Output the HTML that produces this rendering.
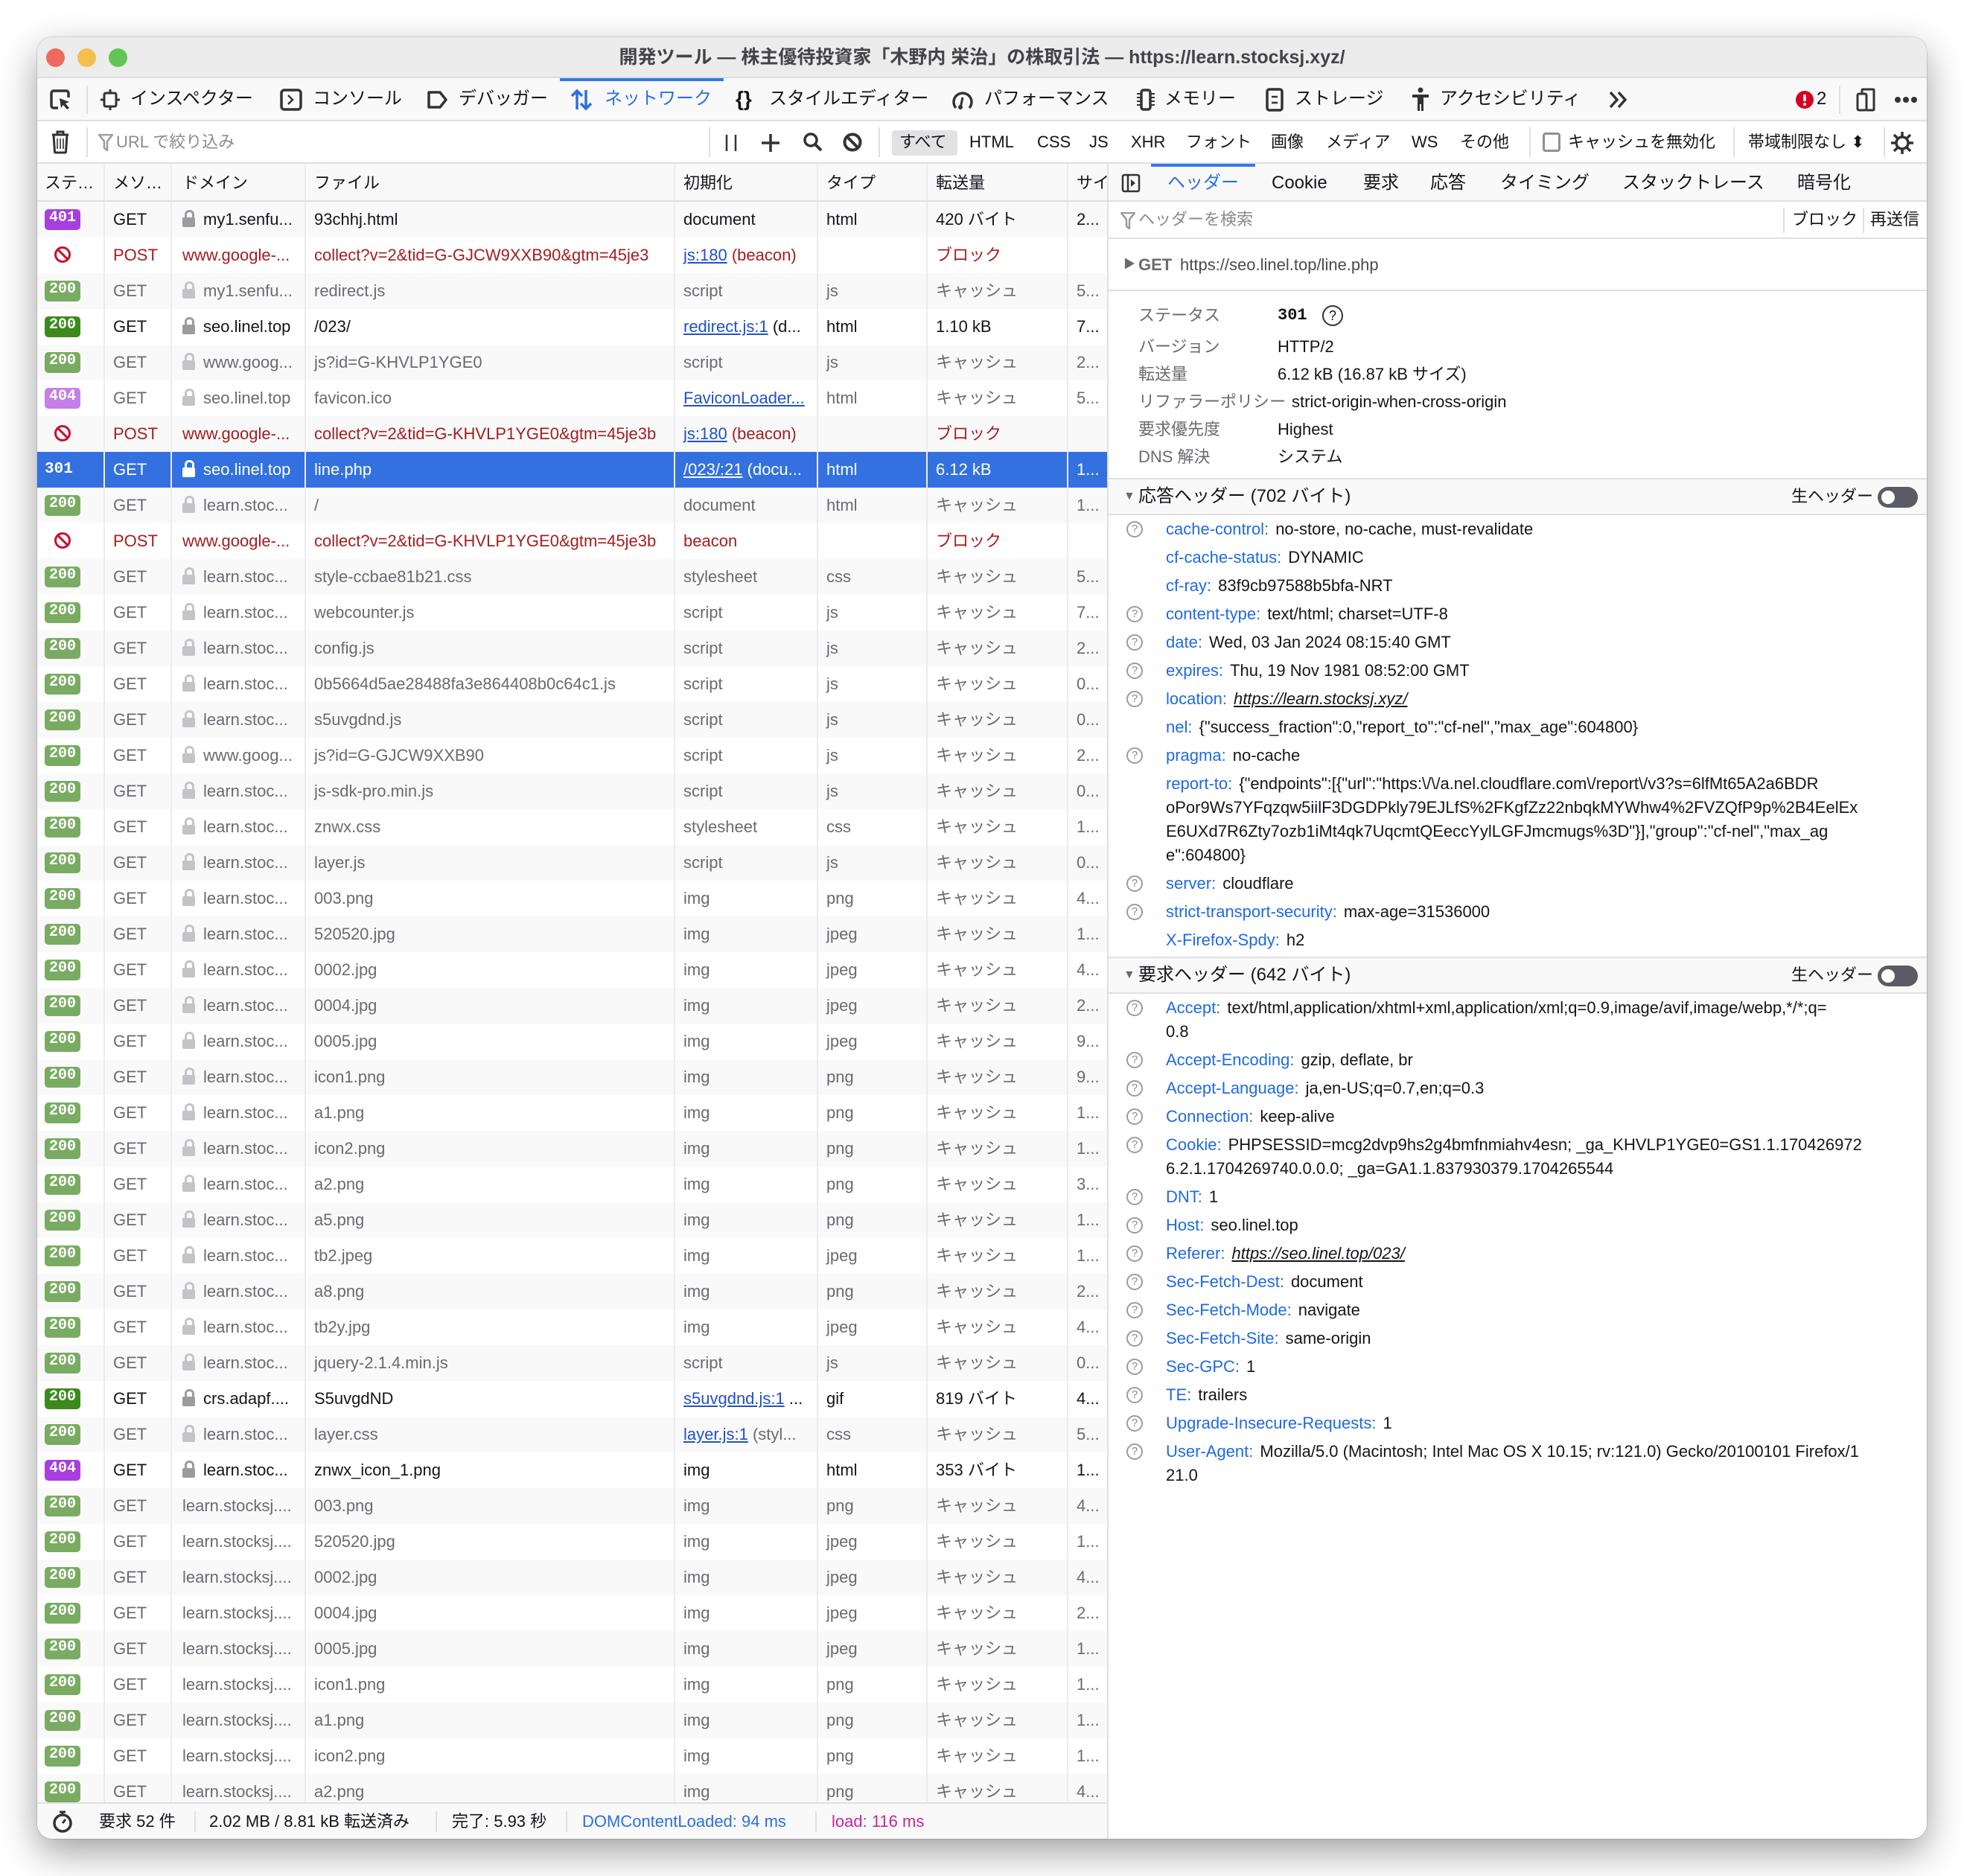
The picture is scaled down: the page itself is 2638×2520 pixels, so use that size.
<!DOCTYPE html>
<html><head><meta charset="utf-8">
<style>
*{box-sizing:border-box;margin:0;padding:0}
body{width:2638px;height:2520px;background:#fff;position:relative;overflow:hidden;font-family:"Liberation Sans","Noto Sans CJK JP",sans-serif;color:#15141a}
.win{position:absolute;left:50px;top:50px;width:2538px;height:2420px;border-radius:20px;overflow:hidden;background:#fff;box-shadow:0 18px 50px rgba(0,0,0,.38),0 0 0 1px rgba(0,0,0,.12)}
.a{position:absolute;white-space:nowrap}
.title{position:absolute;left:0;top:0;width:2538px;height:55px;background:#ececed;border-bottom:2px solid #dcdcde}
.tl{position:absolute;top:15px;width:25px;height:25px;border-radius:50%}
.tabs{position:absolute;left:0;top:55px;width:2538px;height:58px;background:#f9f9fa;border-bottom:2px solid #e0e0e2;font-size:24px}
.tabs .a{top:0;line-height:56px}
.flt{position:absolute;left:0;top:113px;width:2538px;height:57px;background:#fff;border-bottom:2px solid #e0e0e2;font-size:22px}
.flt .a{top:0;line-height:55px}
.vd{position:absolute;width:2px;background:#e0e0e2}
.left{position:absolute;left:0;top:170px;width:1437px;height:2201px;overflow:hidden}
.hdr{height:51px;background:#f9f9fa;border-bottom:2px solid #e0e0e2;display:flex;font-size:22px}
.hdr span{line-height:52px}
.row{height:48px;display:flex;font-size:22px;line-height:48px;color:#15141a}
.row:nth-child(odd){background:#f9f9fa}
.hdr span,.row span{display:block;overflow:hidden;white-space:nowrap;padding-left:11px;border-right:2px solid #ececee;position:relative}
.c1{width:91px;padding-left:10px!important}.c2{width:90px}.c3{width:180px;padding-left:14px!important}.c4{width:496px}.c5{width:192px}.c6{width:147px}.c7{width:189px}.c8{width:52px;border-right:none!important}
.row.c{color:#6a6a70}
.row.e{color:#a51d1d}
.row.s{background:#3371e0!important;color:#fff}
.row.s a{color:#fff}
.bd{position:absolute;left:10px;top:10px;width:48px;height:28px;line-height:28px;border-radius:5px;color:#fff;font:bold 20px "Liberation Mono",monospace;text-align:center;font-style:normal}
.g{background:#79ac62}.G{background:#3c8a1e}.p{background:#a83ee0}.q{background:#c47fe9}
.lk{display:inline-block;width:17px;height:24px;position:relative;vertical-align:middle;margin-right:11px;margin-top:-5px}
.lk:before{content:"";position:absolute;left:3px;top:0;width:7px;height:10px;border:3px solid #9b9ba0;border-bottom:none;border-radius:6px 6px 0 0}
.lk:after{content:"";position:absolute;left:0;top:10px;width:17px;height:13px;background:#9b9ba0;border-radius:2px}
.c .lk:before{border-color:#c4c4c8}.c .lk:after{background:#c4c4c8}
.s .lk:before{border-color:#fff}.s .lk:after{background:#fff}
.c3 .nl{margin-left:-3px}
a{color:#2150c8;text-decoration:underline}
.blk{display:inline-block;width:22px;height:22px;border:3px solid #c8102e;border-radius:50%;position:relative;margin-left:13px;vertical-align:middle;margin-top:-4px}
.blk:after{content:"";position:absolute;left:7px;top:-2px;width:3px;height:20px;background:#c8102e;transform:rotate(-45deg)}
.status{position:absolute;left:0;top:2371px;width:1437px;height:49px;background:#f9f9fa;border-top:2px solid #e0e0e2;font-size:22px}
.status .a{top:0;line-height:47px}
.right{position:absolute;left:1437px;top:170px;width:1101px;height:2250px;border-left:2px solid #e0e0e2;background:#fff}
.rt{position:absolute;left:0;top:0;width:1101px;height:51px;background:#f9f9fa;border-bottom:2px solid #e0e0e2;font-size:24px}
.rt .a{top:0;line-height:52px}
.rf{position:absolute;left:0;top:51px;width:1101px;height:50px;border-bottom:2px solid #e0e0e2;font-size:22px}
.rf .a{top:0;line-height:48px}
.sum .a{font-size:22px;line-height:30px}
.lab{color:#6a6a70}
.sec{position:absolute;left:0;width:1101px;height:50px;background:#f9f9fa;border-top:2px solid #e0e0e2;border-bottom:2px solid #e0e0e2;font-size:24px}
.sec .a{line-height:46px;top:0}
.tg{position:absolute;right:14px;top:10px;width:54px;height:28px;border-radius:14px;background:#5b5b66}
.tg:after{content:"";position:absolute;left:5px;top:5px;width:18px;height:18px;border-radius:50%;background:#fff}
.ent{position:absolute;left:0;width:1101px;font-size:22px}
.e1{position:relative;padding:3px 0 3px 77px;line-height:32px;white-space:nowrap}
.e1 b{font-weight:normal;color:#1f6ae0;margin-right:9px}
.e1 .qm{position:absolute;left:24px;top:8px;width:22px;height:22px;border:2px solid #9b9ba0;border-radius:50%;color:#8b8b90;font-size:15px;line-height:18px;text-align:center}
.e1 i{color:#15141a}
</style></head><body>
<div class="win">
 <div class="title">
  <div class="tl" style="left:12px;background:#ec6a5e"></div>
  <div class="tl" style="left:54px;background:#f4bf4f"></div>
  <div class="tl" style="left:96px;background:#61c554"></div>
  <div class="a" style="left:0;width:2538px;text-align:center;top:0;line-height:55px;font-size:25px;font-weight:bold;color:#444448">開発ツール — 株主優待投資家「木野内 栄治」の株取引法 — https://learn.stocksj.xyz/</div>
 </div>
 <div class="tabs">
  <svg class="a" style="left:16px;top:14px" width="30" height="30" viewBox="0 0 30 30"><path d="M12 26H6a3 3 0 0 1-3-3V6a3 3 0 0 1 3-3h17a3 3 0 0 1 3 3v6" fill="none" stroke="#333" stroke-width="3.5"/><path d="M14 13l13 5-5 2 5 6-3 2-5-6-3 4z" fill="#333"/></svg>
  <div class="vd" style="left:66px;top:10px;height:38px"></div>
  <svg class="a" style="left:84px;top:14px" width="28" height="30" viewBox="0 0 28 30"><rect x="6" y="6" width="16" height="18" rx="2" fill="none" stroke="#333" stroke-width="3"/><path d="M14 1v5M14 24v5M1 15h5M22 15h5" stroke="#333" stroke-width="3"/></svg>
  <div class="a" style="left:125px">インスペクター</div>
  <svg class="a" style="left:326px;top:14px" width="30" height="30" viewBox="0 0 30 30"><rect x="2" y="2" width="26" height="26" rx="4" fill="none" stroke="#333" stroke-width="3.5"/><path d="M11 9l6 6-6 6" fill="none" stroke="#333" stroke-width="2.5"/></svg>
  <div class="a" style="left:370px">コンソール</div>
  <svg class="a" style="left:522px;top:14px" width="30" height="30" viewBox="0 0 30 30"><path d="M4 5h15l8 10-8 10H4z" fill="none" stroke="#333" stroke-width="3.5" stroke-linejoin="round"/></svg>
  <div class="a" style="left:566px">デバッガー</div>
  <div style="position:absolute;left:702px;top:0;width:220px;height:4px;background:#3478e8"></div>
  <svg class="a" style="left:715px;top:13px" width="32" height="32" viewBox="0 0 32 32"><path d="M10 29V4M3 11l7-7 7 7M22 3v25M15 21l7 7 7-7" fill="none" stroke="#2b6fe0" stroke-width="3.5"/></svg>
  <div class="a" style="left:762px;color:#2b6fe0">ネットワーク</div>
  <div class="a" style="left:938px;font-weight:bold;font-size:28px">{}</div>
  <div class="a" style="left:983px">スタイルエディター</div>
  <svg class="a" style="left:1228px;top:14px" width="30" height="30" viewBox="0 0 30 30"><path d="M6 26A12 12 0 1 1 24 26" fill="none" stroke="#333" stroke-width="3.5"/><path d="M15 12l-3 14" stroke="#333" stroke-width="3"/><circle cx="12" cy="25" r="3" fill="#333"/></svg>
  <div class="a" style="left:1272px">パフォーマンス</div>
  <svg class="a" style="left:1474px;top:13px" width="30" height="32" viewBox="0 0 30 32"><rect x="9" y="3" width="12" height="26" rx="3" fill="none" stroke="#333" stroke-width="3.5"/><path d="M3 8h5M3 13h5M3 18h5M3 23h5M22 8h5M22 13h5M22 18h5M22 23h5" stroke="#333" stroke-width="2"/></svg>
  <div class="a" style="left:1514px">メモリー</div>
  <svg class="a" style="left:1649px;top:13px" width="26" height="32" viewBox="0 0 26 32"><rect x="3" y="2" width="20" height="28" rx="3" fill="none" stroke="#333" stroke-width="3.5"/><path d="M9 12h8M9 20h8" stroke="#333" stroke-width="2.5"/></svg>
  <div class="a" style="left:1689px">ストレージ</div>
  <svg class="a" style="left:1844px;top:12px" width="28" height="34" viewBox="0 0 28 34"><circle cx="14" cy="4" r="3.5" fill="#333"/><path d="M3 10h22v4h-7v18h-3v-9h-2v9h-3V14H3z" fill="#333"/></svg>
  <div class="a" style="left:1884px">アクセシビリティ</div>
  <svg class="a" style="left:2110px;top:16px" width="28" height="26" viewBox="0 0 28 26"><path d="M3 3l9 10-9 10M14 3l9 10-9 10" fill="none" stroke="#333" stroke-width="3.5"/></svg>
  <svg class="a" style="left:2362px;top:17px" width="24" height="24" viewBox="0 0 24 24"><circle cx="12" cy="12" r="12" fill="#d70022"/><path d="M12 5v9" stroke="#fff" stroke-width="3.5"/><circle cx="12" cy="18" r="2" fill="#fff"/></svg>
  <div class="a" style="left:2390px">2</div>
  <div class="vd" style="left:2420px;top:10px;height:38px"></div>
  <svg class="a" style="left:2440px;top:13px" width="30" height="32" viewBox="0 0 30 32"><rect x="5" y="8" width="12" height="22" rx="2" fill="none" stroke="#333" stroke-width="3"/><path d="M11 8V3a1 1 0 0 1 1-1h14a1 1 0 0 1 1 1v26a1 1 0 0 1-1 1h-9" fill="none" stroke="#333" stroke-width="3"/></svg>
  <svg class="a" style="left:2494px;top:24px" width="32" height="10" viewBox="0 0 32 10"><circle cx="5" cy="5" r="4" fill="#333"/><circle cx="16" cy="5" r="4" fill="#333"/><circle cx="27" cy="5" r="4" fill="#333"/></svg>
 </div>
 <div class="flt">
  <svg class="a" style="left:18px;top:12px" width="26" height="32" viewBox="0 0 26 32"><path d="M2 6h22M9 6V2h8v4" fill="none" stroke="#333" stroke-width="3"/><path d="M4 6l1.5 23a1 1 0 0 0 1 1h13a1 1 0 0 0 1-1L22 6" fill="none" stroke="#333" stroke-width="3"/><path d="M9 11v14M13 11v14M17 11v14" stroke="#333" stroke-width="1.6"/></svg>
  <div class="vd" style="left:66px;top:8px;height:40px"></div>
  <svg class="a" style="left:82px;top:17px" width="20" height="24" viewBox="0 0 20 24"><path d="M1 1h18l-7 9v12l-4-3V10z" fill="none" stroke="#9b9ba0" stroke-width="2.5" stroke-linejoin="round"/></svg>
  <div class="a" style="left:106px;color:#8b8b90">URL で絞り込み</div>
  <div class="vd" style="left:902px;top:8px;height:40px"></div>
  <svg class="a" style="left:922px;top:16px" width="20" height="26" viewBox="0 0 20 26"><path d="M4 2v22M16 2v22" stroke="#333" stroke-width="2.5"/></svg>
  <svg class="a" style="left:972px;top:16px" width="26" height="26" viewBox="0 0 26 26"><path d="M13 1v24M1 13h24" stroke="#333" stroke-width="3.5"/></svg>
  <svg class="a" style="left:1028px;top:14px" width="28" height="28" viewBox="0 0 28 28"><circle cx="11" cy="11" r="8" fill="none" stroke="#333" stroke-width="3.5"/><path d="M17 17l8 8" stroke="#333" stroke-width="4"/></svg>
  <svg class="a" style="left:1082px;top:15px" width="26" height="26" viewBox="0 0 26 26"><circle cx="13" cy="13" r="10.5" fill="none" stroke="#333" stroke-width="4"/><path d="M6 6l14 14" stroke="#333" stroke-width="4"/></svg>
  <div class="vd" style="left:1130px;top:8px;height:40px"></div>
  <div style="position:absolute;left:1148px;top:12px;width:88px;height:34px;background:#e2e2e5;border-radius:4px"></div>
  <div class="a" style="left:1158px">すべて</div>
  <div class="a" style="left:1252px">HTML</div>
  <div class="a" style="left:1343px">CSS</div>
  <div class="a" style="left:1413px">JS</div>
  <div class="a" style="left:1469px">XHR</div>
  <div class="a" style="left:1543px">フォント</div>
  <div class="a" style="left:1657px">画像</div>
  <div class="a" style="left:1731px">メディア</div>
  <div class="a" style="left:1846px">WS</div>
  <div class="a" style="left:1911px">その他</div>
  <div class="vd" style="left:2004px;top:8px;height:40px"></div>
  <div style="position:absolute;left:2022px;top:15px;width:24px;height:26px;border:3px solid #8f8f9d;border-radius:4px"></div>
  <div class="a" style="left:2056px">キャッシュを無効化</div>
  <div class="vd" style="left:2278px;top:8px;height:40px"></div>
  <div class="a" style="left:2298px">帯域制限なし ⬍</div>
  <div class="vd" style="left:2480px;top:8px;height:40px"></div>
  <svg class="a" style="left:2488px;top:12px" width="34" height="34" viewBox="0 0 34 34"><circle cx="17" cy="17" r="8" fill="none" stroke="#333" stroke-width="3.5"/><path d="M17 2v7M17 25v7M2 17h7M25 17h7M6 6l5 5M23 23l5 5M6 28l5-5M23 11l5-5" stroke="#333" stroke-width="3.5"/></svg>
 </div>

 <div class="left">
  <div class="hdr"><span class="c1">ステ…</span><span class="c2">メソ…</span><span class="c3">ドメイン</span><span class="c4">ファイル</span><span class="c5">初期化</span><span class="c6">タイプ</span><span class="c7">転送量</span><span class="c8">サイ</span></div>
  <div>
  <div class="row"><span class="c1"><i class="bd p">401</i></span><span class="c2">GET</span><span class="c3"><i class="lk"></i>my1.senfu...</span><span class="c4">93chhj.html</span><span class="c5">document</span><span class="c6">html</span><span class="c7">420 バイト</span><span class="c8">2...</span></div>
  <div class="row e"><span class="c1"><i class="blk"></i></span><span class="c2">POST</span><span class="c3">www.google-...</span><span class="c4">collect?v=2&amp;tid=G-GJCW9XXB90&amp;gtm=45je3</span><span class="c5"><a>js:180</a> (beacon)</span><span class="c6"></span><span class="c7">ブロック</span><span class="c8"></span></div>
  <div class="row c"><span class="c1"><i class="bd g">200</i></span><span class="c2">GET</span><span class="c3"><i class="lk"></i>my1.senfu...</span><span class="c4">redirect.js</span><span class="c5">script</span><span class="c6">js</span><span class="c7">キャッシュ</span><span class="c8">5...</span></div>
  <div class="row"><span class="c1"><i class="bd G">200</i></span><span class="c2">GET</span><span class="c3"><i class="lk"></i>seo.linel.top</span><span class="c4">/023/</span><span class="c5"><a>redirect.js:1</a> (d...</span><span class="c6">html</span><span class="c7">1.10 kB</span><span class="c8">7...</span></div>
  <div class="row c"><span class="c1"><i class="bd g">200</i></span><span class="c2">GET</span><span class="c3"><i class="lk"></i>www.goog...</span><span class="c4">js?id=G-KHVLP1YGE0</span><span class="c5">script</span><span class="c6">js</span><span class="c7">キャッシュ</span><span class="c8">2...</span></div>
  <div class="row c"><span class="c1"><i class="bd q">404</i></span><span class="c2">GET</span><span class="c3"><i class="lk"></i>seo.linel.top</span><span class="c4">favicon.ico</span><span class="c5"><a>FaviconLoader...</a></span><span class="c6">html</span><span class="c7">キャッシュ</span><span class="c8">5...</span></div>
  <div class="row e"><span class="c1"><i class="blk"></i></span><span class="c2">POST</span><span class="c3">www.google-...</span><span class="c4">collect?v=2&amp;tid=G-KHVLP1YGE0&amp;gtm=45je3b</span><span class="c5"><a>js:180</a> (beacon)</span><span class="c6"></span><span class="c7">ブロック</span><span class="c8"></span></div>
  <div class="row s"><span class="c1" style="font:bold 21px 'Liberation Mono',monospace;line-height:48px">301</span><span class="c2">GET</span><span class="c3"><i class="lk"></i>seo.linel.top</span><span class="c4">line.php</span><span class="c5"><a>/023/:21</a> (docu...</span><span class="c6">html</span><span class="c7">6.12 kB</span><span class="c8">1...</span></div>
  <div class="row c"><span class="c1"><i class="bd g">200</i></span><span class="c2">GET</span><span class="c3"><i class="lk"></i>learn.stoc...</span><span class="c4">/</span><span class="c5">document</span><span class="c6">html</span><span class="c7">キャッシュ</span><span class="c8">1...</span></div>
  <div class="row e"><span class="c1"><i class="blk"></i></span><span class="c2">POST</span><span class="c3">www.google-...</span><span class="c4">collect?v=2&amp;tid=G-KHVLP1YGE0&amp;gtm=45je3b</span><span class="c5">beacon</span><span class="c6"></span><span class="c7">ブロック</span><span class="c8"></span></div>
  <div class="row c"><span class="c1"><i class="bd g">200</i></span><span class="c2">GET</span><span class="c3"><i class="lk"></i>learn.stoc...</span><span class="c4">style-ccbae81b21.css</span><span class="c5">stylesheet</span><span class="c6">css</span><span class="c7">キャッシュ</span><span class="c8">5...</span></div>
  <div class="row c"><span class="c1"><i class="bd g">200</i></span><span class="c2">GET</span><span class="c3"><i class="lk"></i>learn.stoc...</span><span class="c4">webcounter.js</span><span class="c5">script</span><span class="c6">js</span><span class="c7">キャッシュ</span><span class="c8">7...</span></div>
  <div class="row c"><span class="c1"><i class="bd g">200</i></span><span class="c2">GET</span><span class="c3"><i class="lk"></i>learn.stoc...</span><span class="c4">config.js</span><span class="c5">script</span><span class="c6">js</span><span class="c7">キャッシュ</span><span class="c8">2...</span></div>
  <div class="row c"><span class="c1"><i class="bd g">200</i></span><span class="c2">GET</span><span class="c3"><i class="lk"></i>learn.stoc...</span><span class="c4">0b5664d5ae28488fa3e864408b0c64c1.js</span><span class="c5">script</span><span class="c6">js</span><span class="c7">キャッシュ</span><span class="c8">0...</span></div>
  <div class="row c"><span class="c1"><i class="bd g">200</i></span><span class="c2">GET</span><span class="c3"><i class="lk"></i>learn.stoc...</span><span class="c4">s5uvgdnd.js</span><span class="c5">script</span><span class="c6">js</span><span class="c7">キャッシュ</span><span class="c8">0...</span></div>
  <div class="row c"><span class="c1"><i class="bd g">200</i></span><span class="c2">GET</span><span class="c3"><i class="lk"></i>www.goog...</span><span class="c4">js?id=G-GJCW9XXB90</span><span class="c5">script</span><span class="c6">js</span><span class="c7">キャッシュ</span><span class="c8">2...</span></div>
  <div class="row c"><span class="c1"><i class="bd g">200</i></span><span class="c2">GET</span><span class="c3"><i class="lk"></i>learn.stoc...</span><span class="c4">js-sdk-pro.min.js</span><span class="c5">script</span><span class="c6">js</span><span class="c7">キャッシュ</span><span class="c8">0...</span></div>
  <div class="row c"><span class="c1"><i class="bd g">200</i></span><span class="c2">GET</span><span class="c3"><i class="lk"></i>learn.stoc...</span><span class="c4">znwx.css</span><span class="c5">stylesheet</span><span class="c6">css</span><span class="c7">キャッシュ</span><span class="c8">1...</span></div>
  <div class="row c"><span class="c1"><i class="bd g">200</i></span><span class="c2">GET</span><span class="c3"><i class="lk"></i>learn.stoc...</span><span class="c4">layer.js</span><span class="c5">script</span><span class="c6">js</span><span class="c7">キャッシュ</span><span class="c8">0...</span></div>
  <div class="row c"><span class="c1"><i class="bd g">200</i></span><span class="c2">GET</span><span class="c3"><i class="lk"></i>learn.stoc...</span><span class="c4">003.png</span><span class="c5">img</span><span class="c6">png</span><span class="c7">キャッシュ</span><span class="c8">4...</span></div>
  <div class="row c"><span class="c1"><i class="bd g">200</i></span><span class="c2">GET</span><span class="c3"><i class="lk"></i>learn.stoc...</span><span class="c4">520520.jpg</span><span class="c5">img</span><span class="c6">jpeg</span><span class="c7">キャッシュ</span><span class="c8">1...</span></div>
  <div class="row c"><span class="c1"><i class="bd g">200</i></span><span class="c2">GET</span><span class="c3"><i class="lk"></i>learn.stoc...</span><span class="c4">0002.jpg</span><span class="c5">img</span><span class="c6">jpeg</span><span class="c7">キャッシュ</span><span class="c8">4...</span></div>
  <div class="row c"><span class="c1"><i class="bd g">200</i></span><span class="c2">GET</span><span class="c3"><i class="lk"></i>learn.stoc...</span><span class="c4">0004.jpg</span><span class="c5">img</span><span class="c6">jpeg</span><span class="c7">キャッシュ</span><span class="c8">2...</span></div>
  <div class="row c"><span class="c1"><i class="bd g">200</i></span><span class="c2">GET</span><span class="c3"><i class="lk"></i>learn.stoc...</span><span class="c4">0005.jpg</span><span class="c5">img</span><span class="c6">jpeg</span><span class="c7">キャッシュ</span><span class="c8">9...</span></div>
  <div class="row c"><span class="c1"><i class="bd g">200</i></span><span class="c2">GET</span><span class="c3"><i class="lk"></i>learn.stoc...</span><span class="c4">icon1.png</span><span class="c5">img</span><span class="c6">png</span><span class="c7">キャッシュ</span><span class="c8">9...</span></div>
  <div class="row c"><span class="c1"><i class="bd g">200</i></span><span class="c2">GET</span><span class="c3"><i class="lk"></i>learn.stoc...</span><span class="c4">a1.png</span><span class="c5">img</span><span class="c6">png</span><span class="c7">キャッシュ</span><span class="c8">1...</span></div>
  <div class="row c"><span class="c1"><i class="bd g">200</i></span><span class="c2">GET</span><span class="c3"><i class="lk"></i>learn.stoc...</span><span class="c4">icon2.png</span><span class="c5">img</span><span class="c6">png</span><span class="c7">キャッシュ</span><span class="c8">1...</span></div>
  <div class="row c"><span class="c1"><i class="bd g">200</i></span><span class="c2">GET</span><span class="c3"><i class="lk"></i>learn.stoc...</span><span class="c4">a2.png</span><span class="c5">img</span><span class="c6">png</span><span class="c7">キャッシュ</span><span class="c8">3...</span></div>
  <div class="row c"><span class="c1"><i class="bd g">200</i></span><span class="c2">GET</span><span class="c3"><i class="lk"></i>learn.stoc...</span><span class="c4">a5.png</span><span class="c5">img</span><span class="c6">png</span><span class="c7">キャッシュ</span><span class="c8">1...</span></div>
  <div class="row c"><span class="c1"><i class="bd g">200</i></span><span class="c2">GET</span><span class="c3"><i class="lk"></i>learn.stoc...</span><span class="c4">tb2.jpeg</span><span class="c5">img</span><span class="c6">jpeg</span><span class="c7">キャッシュ</span><span class="c8">1...</span></div>
  <div class="row c"><span class="c1"><i class="bd g">200</i></span><span class="c2">GET</span><span class="c3"><i class="lk"></i>learn.stoc...</span><span class="c4">a8.png</span><span class="c5">img</span><span class="c6">png</span><span class="c7">キャッシュ</span><span class="c8">2...</span></div>
  <div class="row c"><span class="c1"><i class="bd g">200</i></span><span class="c2">GET</span><span class="c3"><i class="lk"></i>learn.stoc...</span><span class="c4">tb2y.jpg</span><span class="c5">img</span><span class="c6">jpeg</span><span class="c7">キャッシュ</span><span class="c8">4...</span></div>
  <div class="row c"><span class="c1"><i class="bd g">200</i></span><span class="c2">GET</span><span class="c3"><i class="lk"></i>learn.stoc...</span><span class="c4">jquery-2.1.4.min.js</span><span class="c5">script</span><span class="c6">js</span><span class="c7">キャッシュ</span><span class="c8">0...</span></div>
  <div class="row"><span class="c1"><i class="bd G">200</i></span><span class="c2">GET</span><span class="c3"><i class="lk"></i>crs.adapf....</span><span class="c4">S5uvgdND</span><span class="c5"><a>s5uvgdnd.js:1</a> ...</span><span class="c6">gif</span><span class="c7">819 バイト</span><span class="c8">4...</span></div>
  <div class="row c"><span class="c1"><i class="bd g">200</i></span><span class="c2">GET</span><span class="c3"><i class="lk"></i>learn.stoc...</span><span class="c4">layer.css</span><span class="c5"><a>layer.js:1</a> (styl...</span><span class="c6">css</span><span class="c7">キャッシュ</span><span class="c8">5...</span></div>
  <div class="row"><span class="c1"><i class="bd p">404</i></span><span class="c2">GET</span><span class="c3"><i class="lk"></i>learn.stoc...</span><span class="c4">znwx_icon_1.png</span><span class="c5">img</span><span class="c6">html</span><span class="c7">353 バイト</span><span class="c8">1...</span></div>
  <div class="row c"><span class="c1"><i class="bd g">200</i></span><span class="c2">GET</span><span class="c3">learn.stocksj....</span><span class="c4">003.png</span><span class="c5">img</span><span class="c6">png</span><span class="c7">キャッシュ</span><span class="c8">4...</span></div>
  <div class="row c"><span class="c1"><i class="bd g">200</i></span><span class="c2">GET</span><span class="c3">learn.stocksj....</span><span class="c4">520520.jpg</span><span class="c5">img</span><span class="c6">jpeg</span><span class="c7">キャッシュ</span><span class="c8">1...</span></div>
  <div class="row c"><span class="c1"><i class="bd g">200</i></span><span class="c2">GET</span><span class="c3">learn.stocksj....</span><span class="c4">0002.jpg</span><span class="c5">img</span><span class="c6">jpeg</span><span class="c7">キャッシュ</span><span class="c8">4...</span></div>
  <div class="row c"><span class="c1"><i class="bd g">200</i></span><span class="c2">GET</span><span class="c3">learn.stocksj....</span><span class="c4">0004.jpg</span><span class="c5">img</span><span class="c6">jpeg</span><span class="c7">キャッシュ</span><span class="c8">2...</span></div>
  <div class="row c"><span class="c1"><i class="bd g">200</i></span><span class="c2">GET</span><span class="c3">learn.stocksj....</span><span class="c4">0005.jpg</span><span class="c5">img</span><span class="c6">jpeg</span><span class="c7">キャッシュ</span><span class="c8">1...</span></div>
  <div class="row c"><span class="c1"><i class="bd g">200</i></span><span class="c2">GET</span><span class="c3">learn.stocksj....</span><span class="c4">icon1.png</span><span class="c5">img</span><span class="c6">png</span><span class="c7">キャッシュ</span><span class="c8">1...</span></div>
  <div class="row c"><span class="c1"><i class="bd g">200</i></span><span class="c2">GET</span><span class="c3">learn.stocksj....</span><span class="c4">a1.png</span><span class="c5">img</span><span class="c6">png</span><span class="c7">キャッシュ</span><span class="c8">1...</span></div>
  <div class="row c"><span class="c1"><i class="bd g">200</i></span><span class="c2">GET</span><span class="c3">learn.stocksj....</span><span class="c4">icon2.png</span><span class="c5">img</span><span class="c6">png</span><span class="c7">キャッシュ</span><span class="c8">1...</span></div>
  <div class="row c"><span class="c1"><i class="bd g">200</i></span><span class="c2">GET</span><span class="c3">learn.stocksj....</span><span class="c4">a2.png</span><span class="c5">img</span><span class="c6">png</span><span class="c7">キャッシュ</span><span class="c8">4...</span></div>
  </div>
 </div>
 <div class="status">
  <svg class="a" style="left:20px;top:9px" width="28" height="30" viewBox="0 0 28 30"><circle cx="14" cy="17" r="11" fill="none" stroke="#333" stroke-width="3.5"/><path d="M10 2h8M14 2v4M14 17l4-5" stroke="#333" stroke-width="3"/></svg>
  <div class="a" style="left:83px">要求 52 件</div>
  <div class="vd" style="left:211px;top:10px;height:28px"></div>
  <div class="a" style="left:231px">2.02 MB / 8.81 kB 転送済み</div>
  <div class="vd" style="left:535px;top:10px;height:28px"></div>
  <div class="a" style="left:557px">完了: 5.93 秒</div>
  <div class="vd" style="left:710px;top:10px;height:28px"></div>
  <div class="a" style="left:732px;color:#2b6fe0">DOMContentLoaded: 94 ms</div>
  <div class="vd" style="left:1045px;top:10px;height:28px"></div>
  <div class="a" style="left:1067px;color:#c5269f">load: 116 ms</div>
 </div>

 <div class="right">
  <div class="rt">
   <svg class="a" style="left:17px;top:13px" width="26" height="26" viewBox="0 0 26 26"><rect x="2" y="2" width="22" height="22" rx="2" fill="none" stroke="#333" stroke-width="2.5"/><path d="M9 2v22" stroke="#333" stroke-width="2.5"/><path d="M13 8l6 5-6 5z" fill="#333"/></svg>
   <div style="position:absolute;left:57px;top:0;width:140px;height:4px;background:#3478e8"></div>
   <div class="a" style="left:79px;color:#2b6fe0">ヘッダー</div>
   <div class="a" style="left:219px">Cookie</div>
   <div class="a" style="left:342px">要求</div>
   <div class="a" style="left:432px">応答</div>
   <div class="a" style="left:526px">タイミング</div>
   <div class="a" style="left:690px">スタックトレース</div>
   <div class="a" style="left:925px">暗号化</div>
  </div>
  <div class="rf">
   <svg class="a" style="left:16px;top:14px" width="20" height="24" viewBox="0 0 20 24"><path d="M1 1h18l-7 9v12l-4-3V10z" fill="none" stroke="#9b9ba0" stroke-width="2.5" stroke-linejoin="round"/></svg>
   <div class="a" style="left:40px;color:#8b8b90">ヘッダーを検索</div>
   <div class="vd" style="left:906px;top:8px;height:34px"></div>
   <div class="a" style="left:918px">ブロック</div>
   <div class="vd" style="left:1013px;top:8px;height:34px"></div>
   <div class="a" style="left:1023px">再送信</div>
  </div>
  <div style="position:absolute;left:0;top:101px;width:1101px;height:70px;border-bottom:2px solid #e0e0e2;font-size:22px">
   <div class="a" style="left:20px;top:0;line-height:70px;color:#6a6a70;font-size:16px">▶</div>
   <div class="a" style="left:40px;top:0;line-height:70px;color:#6a6a70;font-weight:bold">GET</div>
   <div class="a" style="left:96px;top:0;line-height:70px;color:#4a4a50">https://seo.linel.top/line.php</div>
  </div>
  <div class="sum">
   <div class="a lab" style="left:40px;top:189px">ステータス</div>
   <div class="a" style="left:227px;top:189px;font:bold 22px 'Liberation Mono',monospace;line-height:30px">301</div>
   <div class="a" style="left:287px;top:190px;width:28px;height:28px;border:2px solid #333;border-radius:50%;font-size:18px;line-height:24px;text-align:center">?</div>
   <div class="a lab" style="left:40px;top:231px">バージョン</div><div class="a" style="left:227px;top:231px">HTTP/2</div>
   <div class="a lab" style="left:40px;top:268px">転送量</div><div class="a" style="left:227px;top:268px">6.12 kB (16.87 kB サイズ)</div>
   <div class="a lab" style="left:40px;top:305px">リファラーポリシー</div><div class="a" style="left:246px;top:305px">strict-origin-when-cross-origin</div>
   <div class="a lab" style="left:40px;top:342px">要求優先度</div><div class="a" style="left:227px;top:342px">Highest</div>
   <div class="a lab" style="left:40px;top:379px">DNS 解決</div><div class="a" style="left:227px;top:379px">システム</div>
  </div>
  <div class="sec" style="top:422px">
   <div class="a" style="left:20px;font-size:16px;color:#6a6a70">▼</div>
   <div class="a" style="left:40px">応答ヘッダー (702 バイト)</div>
   <div class="a" style="left:917px;font-size:22px">生ヘッダー</div>
   <div class="tg"></div>
  </div>
  <div class="ent" style="top:472px">
   <div class="e1"><span class="qm">?</span><b>cache-control:</b>no-store, no-cache, must-revalidate</div>
   <div class="e1"><b>cf-cache-status:</b>DYNAMIC</div>
   <div class="e1"><b>cf-ray:</b>83f9cb97588b5bfa-NRT</div>
   <div class="e1"><span class="qm">?</span><b>content-type:</b>text/html; charset=UTF-8</div>
   <div class="e1"><span class="qm">?</span><b>date:</b>Wed, 03 Jan 2024 08:15:40 GMT</div>
   <div class="e1"><span class="qm">?</span><b>expires:</b>Thu, 19 Nov 1981 08:52:00 GMT</div>
   <div class="e1"><span class="qm">?</span><b>location:</b><i style="text-decoration:underline">https://learn.stocksj.xyz/</i></div>
   <div class="e1"><b>nel:</b>{"success_fraction":0,"report_to":"cf-nel","max_age":604800}</div>
   <div class="e1"><span class="qm">?</span><b>pragma:</b>no-cache</div>
   <div class="e1"><b>report-to:</b>{"endpoints":[{"url":"https:\/\/a.nel.cloudflare.com\/report\/v3?s=6lfMt65A2a6BDR<br>oPor9Ws7YFqzqw5iilF3DGDPkly79EJLfS%2FKgfZz22nbqkMYWhw4%2FVZQfP9p%2B4EelEx<br>E6UXd7R6Zty7ozb1iMt4qk7UqcmtQEeccYylLGFJmcmugs%3D"}],"group":"cf-nel","max_ag<br>e":604800}</div>
   <div class="e1"><span class="qm">?</span><b>server:</b>cloudflare</div>
   <div class="e1"><span class="qm">?</span><b>strict-transport-security:</b>max-age=31536000</div>
   <div class="e1"><b>X-Firefox-Spdy:</b>h2</div>
  </div>
  <div class="sec" style="top:1065px">
   <div class="a" style="left:20px;font-size:16px;color:#6a6a70">▼</div>
   <div class="a" style="left:40px">要求ヘッダー (642 バイト)</div>
   <div class="a" style="left:917px;font-size:22px">生ヘッダー</div>
   <div class="tg"></div>
  </div>
  <div class="ent" style="top:1115px">
   <div class="e1"><span class="qm">?</span><b>Accept:</b>text/html,application/xhtml+xml,application/xml;q=0.9,image/avif,image/webp,*/*;q=<br>0.8</div>
   <div class="e1"><span class="qm">?</span><b>Accept-Encoding:</b>gzip, deflate, br</div>
   <div class="e1"><span class="qm">?</span><b>Accept-Language:</b>ja,en-US;q=0.7,en;q=0.3</div>
   <div class="e1"><span class="qm">?</span><b>Connection:</b>keep-alive</div>
   <div class="e1"><span class="qm">?</span><b>Cookie:</b>PHPSESSID=mcg2dvp9hs2g4bmfnmiahv4esn; _ga_KHVLP1YGE0=GS1.1.170426972<br>6.2.1.1704269740.0.0.0; _ga=GA1.1.837930379.1704265544</div>
   <div class="e1"><span class="qm">?</span><b>DNT:</b>1</div>
   <div class="e1"><span class="qm">?</span><b>Host:</b>seo.linel.top</div>
   <div class="e1"><span class="qm">?</span><b>Referer:</b><i style="text-decoration:underline">https://seo.linel.top/023/</i></div>
   <div class="e1"><span class="qm">?</span><b>Sec-Fetch-Dest:</b>document</div>
   <div class="e1"><span class="qm">?</span><b>Sec-Fetch-Mode:</b>navigate</div>
   <div class="e1"><span class="qm">?</span><b>Sec-Fetch-Site:</b>same-origin</div>
   <div class="e1"><span class="qm">?</span><b>Sec-GPC:</b>1</div>
   <div class="e1"><span class="qm">?</span><b>TE:</b>trailers</div>
   <div class="e1"><span class="qm">?</span><b>Upgrade-Insecure-Requests:</b>1</div>
   <div class="e1"><span class="qm">?</span><b>User-Agent:</b>Mozilla/5.0 (Macintosh; Intel Mac OS X 10.15; rv:121.0) Gecko/20100101 Firefox/1<br>21.0</div>
  </div>
 </div>
</div>
</body></html>
